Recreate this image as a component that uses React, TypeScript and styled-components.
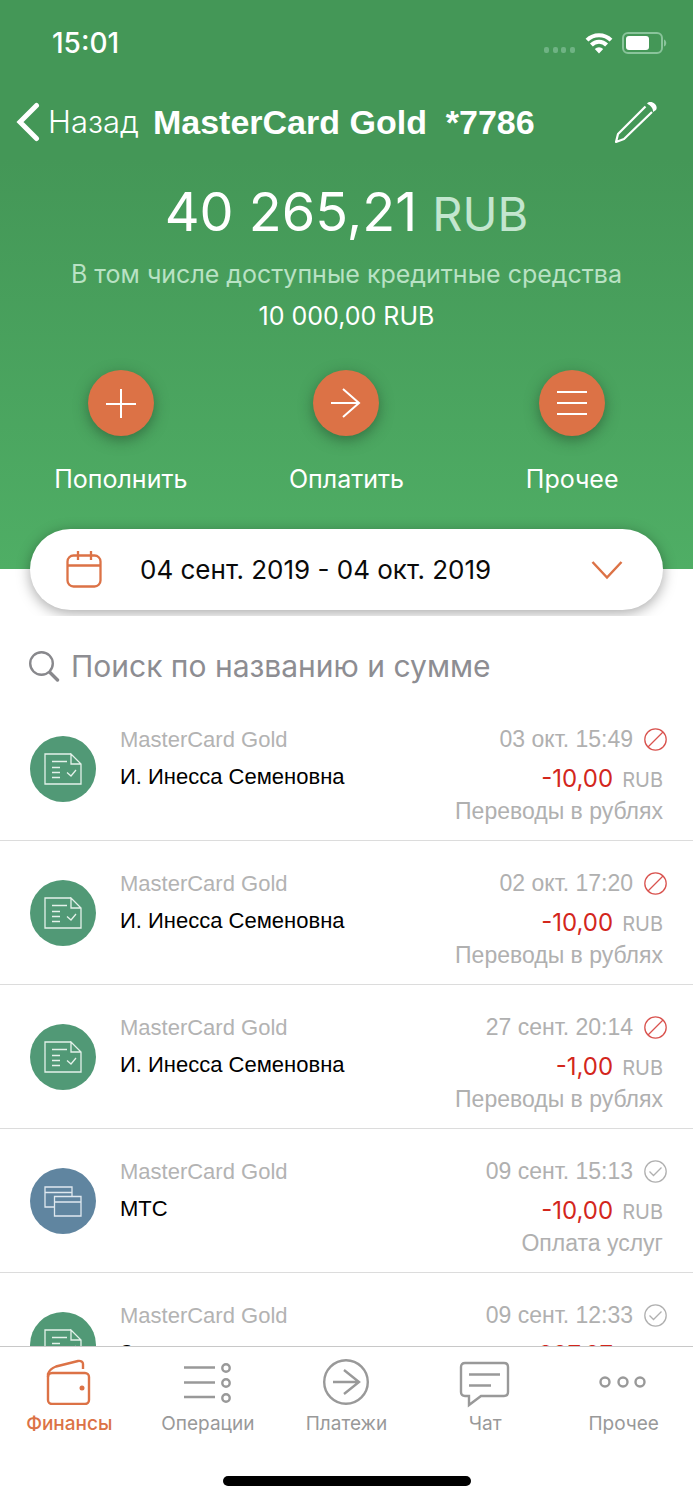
import React from "react";
import styled, { createGlobalStyle } from "styled-components";

const inter = `Inter, "Liberation Sans", sans-serif`;
const grotesk = `"Liberation Sans", Arial, sans-serif`;
const orange = "#dc7246";

const GlobalStyle = createGlobalStyle`
  * { box-sizing: border-box; }
  body { margin: 0; background: #fff; font-family: ${inter}; color: #000; }
  button { border: 0; background: none; padding: 0; font: inherit; color: inherit; cursor: pointer; }
  svg { display: block; flex: none; }
`;

const Screen = styled.div`
  display: flex;
  flex-direction: column;
  height: 100vh;
`;

const Header = styled.header`
  flex: none;
  display: flex;
  flex-direction: column;
  align-items: center;
  background: linear-gradient(#449757 0, #449757 28%, #4fae65 100%);
  color: #fff;
`;

const StatusBar = styled.div`
  align-self: stretch;
  display: flex;
  align-items: center;
  justify-content: space-between;
  height: 84px;
  padding: 2px 26px 0 52px;
`;

const Clock = styled.time`
  font-size: 28px;
  line-height: 32px;
  font-weight: 500;
`;

const StatusIcons = styled.div`
  display: flex;
  align-items: center;
  gap: 9px;
`;

const NavBar = styled.nav`
  align-self: stretch;
  display: flex;
  align-items: center;
  height: 76px;
  padding: 0 36px 0 16px;
`;

const BackButton = styled.button`
  display: flex;
  align-items: center;
  gap: 8px;
  font-size: 31px;
  line-height: 36px;
  font-weight: 300;
`;

const Title = styled.h1`
  flex: 1;
  margin: 0 0 0 14px;
  font-family: ${grotesk};
  font-size: 34px;
  line-height: 40px;
  font-weight: 700;
  white-space: pre;
`;

const Balance = styled.p`
  margin: 16px 0 0;
  font-size: 54px;
  line-height: 72px;
  font-weight: 400;
  white-space: nowrap;
`;

const BalanceUnit = styled.span`
  font-size: 47px;
  color: #c3e6cf;
`;

const CreditNote = styled.p`
  margin: 8px 0 0;
  font-size: 25px;
  line-height: 32px;
  color: #b9e2c4;
  text-align: center;
`;

const CreditAmount = styled.p`
  margin: 10px 0 0;
  font-size: 25px;
  line-height: 32px;
`;

const Actions = styled.div`
  align-self: stretch;
  display: grid;
  grid-template-columns: repeat(3, 1fr);
  margin: 38px 8px 0;
`;

const Action = styled.button`
  display: flex;
  flex-direction: column;
  align-items: center;
  gap: 27px;
  font-size: 25px;
  line-height: 32px;
`;

const ActionDisc = styled.span`
  display: grid;
  place-items: center;
  width: 66px;
  height: 66px;
  border-radius: 50%;
  background: ${orange};
  box-shadow: 0 4px 14px rgba(30, 60, 35, 0.5);
`;

const PeriodArea = styled.div`
  align-self: stretch;
  margin-bottom: -47px;
  padding: 34px 30px 6px;
  overflow: hidden;
`;

const PeriodButton = styled.button`
  display: flex;
  align-items: center;
  width: 100%;
  height: 81px;
  padding: 0 40px 0 36px;
  border-radius: 41px;
  background: #fff;
  color: #0a0a0a;
  font-size: 26px;
  line-height: 32px;
  box-shadow: 0 3px 14px rgba(0, 0, 0, 0.35);
`;

const PeriodText = styled.span`
  flex: 1;
  margin-left: 38px;
  text-align: left;
`;

const SearchBar = styled.label`
  flex: none;
  display: flex;
  align-items: center;
  gap: 11px;
  margin-top: 72px;
  padding: 0 29px;
  height: 50px;
`;

const SearchInput = styled.input`
  flex: 1;
  min-width: 0;
  border: 0;
  outline: 0;
  padding: 0;
  background: none;
  font: 400 30px/40px ${inter};
  &::placeholder { color: #8d8d92; opacity: 1; }
`;

const History = styled.ul`
  flex: 1;
  min-height: 0;
  margin: 6px 0 0;
  padding: 0;
  list-style: none;
  overflow-y: auto;
  scrollbar-width: none;
`;

const Row = styled.li`
  display: flex;
  height: 144px;
  padding: 0 26px 0 30px;
  border-bottom: 1px solid #dcdcdc;
  font-family: ${grotesk};
  font-size: 22px;
  line-height: 28px;
`;

const RowDisc = styled.span<{ $tone: string }>`
  flex: none;
  align-self: center;
  display: grid;
  place-items: center;
  width: 66px;
  height: 66px;
  border-radius: 50%;
  background: ${(p) => p.$tone};
`;

const RowMain = styled.div`
  flex: 1;
  min-width: 0;
  padding: 29px 0 0 24px;
`;

const CardName = styled.div`
  color: #b3b3b3;
`;

const Payee = styled.div`
  margin-top: 9px;
  color: #000;
`;

const RowSide = styled.div`
  display: flex;
  flex-direction: column;
  align-items: flex-end;
  padding-top: 28px;
  font-size: 23px;
  color: #b0b0b0;
`;

const DateLine = styled.div`
  display: flex;
  align-items: center;
  gap: 11px;
`;

const Amount = styled.div`
  display: flex;
  align-items: baseline;
  gap: 9px;
  margin: 11px 4px 0 0;
  font-family: ${inter};
  font-size: 24px;
  line-height: 30px;
  color: #d3261c;
`;

const Currency = styled.span`
  font-size: 20px;
  color: #b0b0b0;
`;

const Category = styled.div`
  margin-right: 4px;
  margin-top: 2px;
`;

const TabBar = styled.nav`
  flex: none;
  display: grid;
  grid-template-columns: repeat(5, 1fr);
  border-top: 1px solid #c8c8c8;
  background: #fff;
  padding-top: 10px;
`;

const Tab = styled.a<{ $active?: boolean }>`
  display: flex;
  flex-direction: column;
  align-items: center;
  gap: 7px;
  font-size: 19px;
  line-height: 24px;
  font-weight: ${(p) => (p.$active ? 500 : 400)};
  color: ${(p) => (p.$active ? orange : "#999")};
  text-decoration: none;
`;

const HomeIndicator = styled.div`
  flex: none;
  width: 248px;
  height: 10px;
  margin: 40px auto 14px;
  border-radius: 5px;
  background: #000;
`;

const SignalIcon = () => (
  <svg width="32" height="26" viewBox="0 0 32 26" fill="#6fb384">
    {[0, 9, 17, 26].map((x) => (
      <rect key={x} x={x} y="17" width="5" height="6" rx="2" />
    ))}
  </svg>
);

const WifiIcon = () => (
  <svg width="28" height="22" viewBox="0 0 28 22" fill="none" stroke="#fff" strokeWidth="4">
    <path d="M2 8.2a17 17 0 0 1 24 0" />
    <path d="M6.4 13a10.6 10.6 0 0 1 15.2 0" />
    <path d="M9.8 17 14 21.4 18.2 17a6 6 0 0 0-8.4 0z" fill="#fff" stroke="none" />
  </svg>
);

const BatteryIcon = () => (
  <svg width="45" height="22" viewBox="0 0 45 22">
    <rect x="1" y="1" width="39" height="20" rx="5" fill="none" stroke="#8ac49b" strokeWidth="2" />
    <path d="M42 7.5c3 1 3 6 0 7z" fill="#8ac49b" />
    <rect x="4" y="4" width="23" height="14" rx="3" fill="#fff" />
  </svg>
);

const BackIcon = () => (
  <svg width="24" height="40" viewBox="0 0 24 40" fill="none" stroke="#fff" strokeWidth="5" strokeLinecap="round">
    <path d="M20.5 3.5 4 20l16.5 16.5" />
  </svg>
);

const PencilIcon = () => (
  <svg width="44" height="44" viewBox="0 0 44 44" fill="none" stroke="#fff" strokeWidth="2.2" strokeLinejoin="round">
    <path d="M32.500 6.500 5 34 3 42l8-3L39 12" />
    <path d="M34 3.500c4-4 12 1.500 9 6.500l-3 2c0-4-2-6-6-8.500z" fill="#fff" stroke="none" />
  </svg>
);

const PlusIcon = () => (
  <svg width="30" height="30" viewBox="0 0 30 30" stroke="#fff" strokeWidth="2">
    <path d="M15 1v29M0 16h30" />
  </svg>
);

const ArrowIcon = () => (
  <svg width="30" height="30" viewBox="0 0 30 30" fill="none" stroke="#fff" strokeWidth="2">
    <path d="M0 15h28M12 1l16 14-16 14" />
  </svg>
);

const LinesIcon = () => (
  <svg width="30" height="26" viewBox="0 0 30 26" stroke="#fff" strokeWidth="2">
    <path d="M0 2h30M0 13h30M0 24h30" />
  </svg>
);

const CalendarIcon = () => (
  <svg width="36" height="38" viewBox="0 0 36 38" fill="none" stroke={orange} strokeWidth="2.3">
    <rect x="1.5" y="4.5" width="33" height="31" rx="6" />
    <path d="M1 14.500h34M12 0v9M25 0v9" />
  </svg>
);

const ChevronIcon = () => (
  <svg width="32" height="20" viewBox="0 0 32 20" fill="none" stroke={orange} strokeWidth="2.5">
    <path d="M1.500 2 16 17.500 30.500 2" />
  </svg>
);

const SearchIcon = () => (
  <svg width="31" height="31" viewBox="0 0 31 31" fill="none" stroke="#88888c" strokeLinecap="round">
    <circle cx="12.5" cy="12.5" r="11.300" strokeWidth="2.400" />
    <path d="M21 21.500l7.500 7.500" strokeWidth="3.400" />
  </svg>
);

const DocumentIcon = () => (
  <svg width="38" height="32" viewBox="0 0 38 32" fill="none" stroke="#e4f1ea" strokeWidth="1.3">
    <path d="M27 1H1v30h36V11L27 1v10h10" />
    <path d="M8 8.500h15M8 14.500h8M8 19.500h8M8 24.500h8M23 19.500l4 3.500 5-6" />
  </svg>
);

const CardsIcon = () => (
  <svg width="38" height="32" viewBox="0 0 38 32" fill="none" stroke="#dfe8ef" strokeWidth="1.3">
    <path d="M10 22H1V2h27v9M1 7.500h27" />
    <path d="M10.500 11.500H37V31H10.500zM10.500 17H37" />
  </svg>
);

const RejectedIcon = () => (
  <svg width="23" height="23" viewBox="0 0 23 23" fill="none" stroke="#d9534f" strokeWidth="1.3">
    <circle cx="11.5" cy="11.5" r="10.7" />
    <path d="M4 19 19 4" />
  </svg>
);

const DoneIcon = () => (
  <svg width="23" height="23" viewBox="0 0 23 23" fill="none" stroke="#b0b0b0" strokeWidth="1.3">
    <circle cx="11.5" cy="11.5" r="10.7" />
    <path d="M5.500 11.500l4 4 8-8" />
  </svg>
);

const tabSvg = { width: 50, height: 48, viewBox: "0 0 50 48", fill: "none", stroke: "currentColor", strokeWidth: 2.4 };

const WalletIcon = () => (
  <svg {...tabSvg}>
    <rect x="4" y="16" width="41" height="31" rx="4" />
    <path d="M4 20v-3c1-3 4-6 8-7.500L34 4c3-.5 5 1 5 3v5" />
    <circle cx="38" cy="31" r="2.5" fill="currentColor" stroke="none" />
  </svg>
);

const OperationsIcon = () => (
  <svg {...tabSvg}>
    <path d="M1 10.500h31M1 25.500h31M1 40h31" />
    <circle cx="43" cy="11" r="3.700" />
    <circle cx="43" cy="26" r="3.700" />
    <circle cx="43" cy="41" r="3.700" />
  </svg>
);

const PaymentsIcon = () => (
  <svg {...tabSvg}>
    <circle cx="25" cy="25" r="21.800" />
    <path d="M12 25h26M23 13l15 12-15 12" />
  </svg>
);

const ChatIcon = () => (
  <svg {...tabSvg} overflow="visible">
    <path d="M5 6h39q4 0 4 4v25q0 4-4 4H21L9 48v-9H5q-4 0-4-4V10q0-4 4-4z" />
    <path d="M9 17.500h31M9 28.500h22" />
  </svg>
);

const MoreIcon = () => (
  <svg {...tabSvg}>
    <circle cx="6" cy="25" r="4.5" />
    <circle cx="24" cy="25" r="4.5" />
    <circle cx="41" cy="25" r="4.5" />
  </svg>
);

type Operation = {
  payee: string;
  date: string;
  amount: string;
  category?: string;
  kind: "transfer" | "service";
  done: boolean;
};

const operations: Operation[] = [
  { payee: "И. Инесса Семеновна", date: "03 окт. 15:49", amount: "-10,00", category: "Переводы в рублях", kind: "transfer", done: false },
  { payee: "И. Инесса Семеновна", date: "02 окт. 17:20", amount: "-10,00", category: "Переводы в рублях", kind: "transfer", done: false },
  { payee: "И. Инесса Семеновна", date: "27 сент. 20:14", amount: "-1,00", category: "Переводы в рублях", kind: "transfer", done: false },
  { payee: "МТС", date: "09 сент. 15:13", amount: "-10,00", category: "Оплата услуг", kind: "service", done: true },
  { payee: "З", date: "09 сент. 12:33", amount: "-227,27", kind: "transfer", done: true },
];

export default function App() {
  return (
    <Screen>
      <GlobalStyle />
      <Header>
        <StatusBar>
          <Clock>15:01</Clock>
          <StatusIcons>
            <SignalIcon />
            <WifiIcon />
            <BatteryIcon />
          </StatusIcons>
        </StatusBar>
        <NavBar>
          <BackButton type="button">
            <BackIcon />
            Назад
          </BackButton>
          <Title>{"MasterCard Gold  *7786"}</Title>
          <button type="button" aria-label="Изменить">
            <PencilIcon />
          </button>
        </NavBar>
        <Balance>
          40 265,21 <BalanceUnit>RUB</BalanceUnit>
        </Balance>
        <CreditNote>В том числе доступные кредитные средства</CreditNote>
        <CreditAmount>10 000,00 RUB</CreditAmount>
        <Actions>
          <Action type="button">
            <ActionDisc><PlusIcon /></ActionDisc>
            Пополнить
          </Action>
          <Action type="button">
            <ActionDisc><ArrowIcon /></ActionDisc>
            Оплатить
          </Action>
          <Action type="button">
            <ActionDisc><LinesIcon /></ActionDisc>
            Прочее
          </Action>
        </Actions>
        <PeriodArea>
          <PeriodButton type="button">
            <CalendarIcon />
            <PeriodText>04 сент. 2019 - 04 окт. 2019</PeriodText>
            <ChevronIcon />
          </PeriodButton>
        </PeriodArea>
      </Header>
      <SearchBar>
        <SearchIcon />
        <SearchInput type="search" placeholder="Поиск по названию и сумме" aria-label="Поиск по названию и сумме" />
      </SearchBar>
      <History>
        {operations.map((op) => (
          <Row key={op.date}>
            <RowDisc $tone={op.kind === "transfer" ? "#519976" : "#6085a0"}>
              {op.kind === "transfer" ? <DocumentIcon /> : <CardsIcon />}
            </RowDisc>
            <RowMain>
              <CardName>MasterCard Gold</CardName>
              <Payee>{op.payee}</Payee>
            </RowMain>
            <RowSide>
              <DateLine>
                {op.date}
                {op.done ? <DoneIcon /> : <RejectedIcon />}
              </DateLine>
              <Amount>
                {op.amount}
                <Currency>RUB</Currency>
              </Amount>
              {op.category && <Category>{op.category}</Category>}
            </RowSide>
          </Row>
        ))}
      </History>
      <TabBar>
        <Tab href="#finance" $active aria-current="page"><WalletIcon />Финансы</Tab>
        <Tab href="#operations"><OperationsIcon />Операции</Tab>
        <Tab href="#payments"><PaymentsIcon />Платежи</Tab>
        <Tab href="#chat"><ChatIcon />Чат</Tab>
        <Tab href="#more"><MoreIcon />Прочее</Tab>
      </TabBar>
      <HomeIndicator />
    </Screen>
  );
}
